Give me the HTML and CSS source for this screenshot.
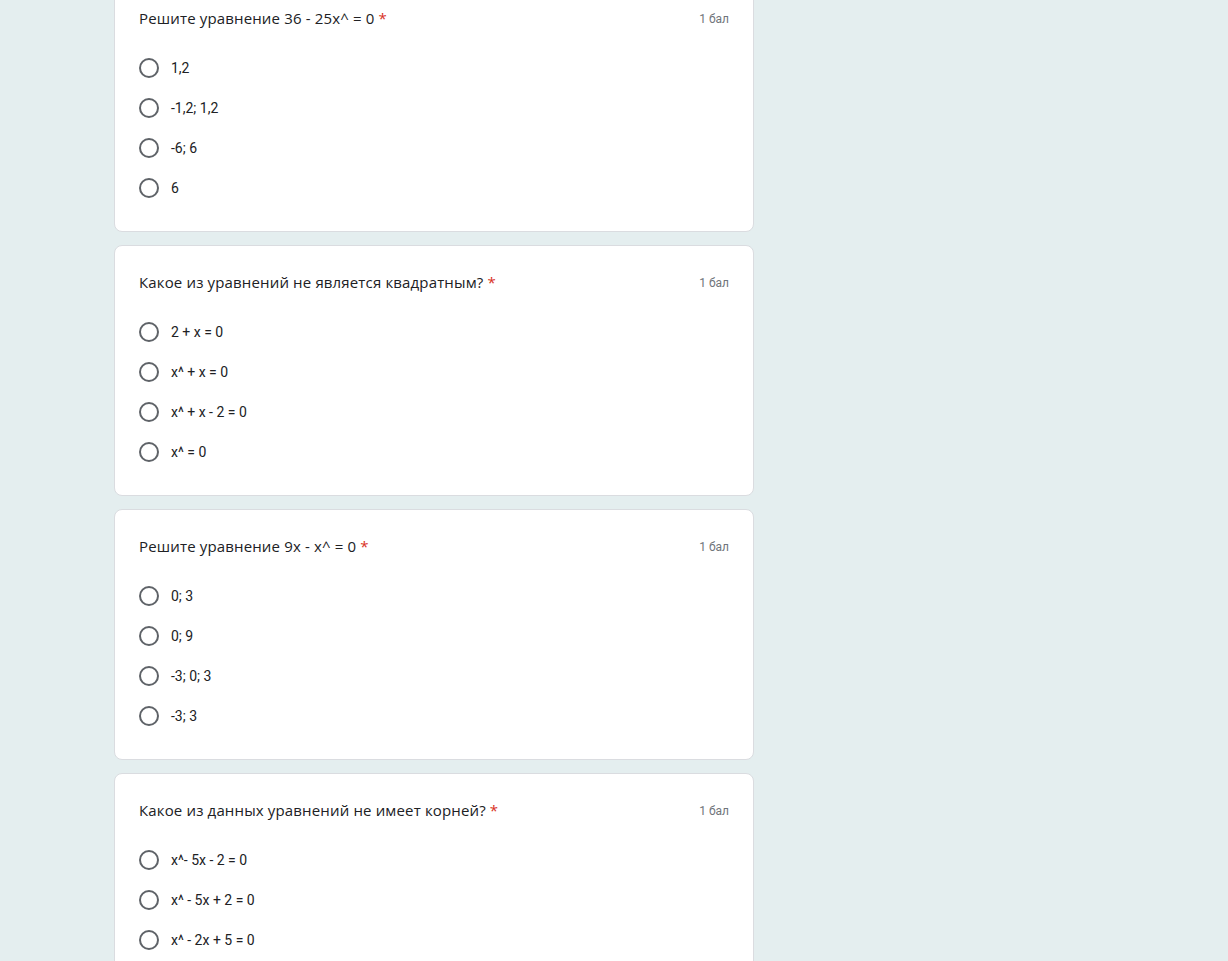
FILE: index.html
```html
<!DOCTYPE html>
<html lang="ru">
<head>
<meta charset="UTF-8">
<meta name="viewport" content="width=device-width, initial-scale=1.0">
<title>Тест</title>
<link rel="stylesheet" href="styles.css">
</head>
<body>

<div class="form">
    <div class="card">
        <div class="head">
            <div class="title">Решите уравнение 36 - 25x^ = 0 <span class="req">*</span></div>
            <div class="points">1 бал</div>
        </div>
        <label class="option"><span class="radio"></span>1,2</label>
        <label class="option"><span class="radio"></span>-1,2; 1,2</label>
        <label class="option"><span class="radio"></span>-6; 6</label>
        <label class="option"><span class="radio"></span>6</label>
    </div>

    <div class="card">
        <div class="head">
            <div class="title">Какое из уравнений не является квадратным? <span class="req">*</span></div>
            <div class="points">1 бал</div>
        </div>
        <label class="option"><span class="radio"></span>2 + x = 0</label>
        <label class="option"><span class="radio"></span>x^ + x = 0</label>
        <label class="option"><span class="radio"></span>x^ + x - 2 = 0</label>
        <label class="option"><span class="radio"></span>x^ = 0</label>
    </div>

    <div class="card">
        <div class="head">
            <div class="title">Решите уравнение 9x - x^ = 0 <span class="req">*</span></div>
            <div class="points">1 бал</div>
        </div>
        <label class="option"><span class="radio"></span>0; 3</label>
        <label class="option"><span class="radio"></span>0; 9</label>
        <label class="option"><span class="radio"></span>-3; 0; 3</label>
        <label class="option"><span class="radio"></span>-3; 3</label>
    </div>

    <div class="card">
        <div class="head">
            <div class="title">Какое из данных уравнений не имеет корней? <span class="req">*</span></div>
            <div class="points">1 бал</div>
        </div>
        <label class="option"><span class="radio"></span>x^- 5x - 2 = 0</label>
        <label class="option"><span class="radio"></span>x^ - 5x + 2 = 0</label>
        <label class="option"><span class="radio"></span>x^ - 2x + 5 = 0</label>
    </div>
</div>

</body>
</html>
```

FILE: styles.css
```css
body {
    margin: 0;
    background-color: #e4eeef;
    font-family: Roboto, "Liberation Sans", sans-serif;
    color: #202124;
    overflow: hidden;
}
.form {
    width: 640px;
    margin: -19px 0 0 114px;
    display: flex;
    flex-direction: column;
    gap: 13px;
}
.card {
    background-color: #fff;
    border: 1px solid #dadce0;
    border-radius: 8px;
    padding: 24px 24px 23px;
}
.head {
    display: flex;
    justify-content: space-between;
    align-items: center;
    margin-bottom: 18px;
}
.title {
    font-family: "Open Sans", sans-serif;
    font-size: 15px;
    line-height: 24px;
    letter-spacing: 0.15px;
}
.req {
    color: #d93025;
}
.points {
    font-size: 12px;
    color: #70757a;
    padding-top: 2px;
}
.option {
    display: flex;
    align-items: center;
    height: 40px;
    font-size: 14px;
}
.radio {
    width: 16px;
    height: 16px;
    border: 2px solid #5f6368;
    border-radius: 50%;
    margin-right: 12px;
}
```
